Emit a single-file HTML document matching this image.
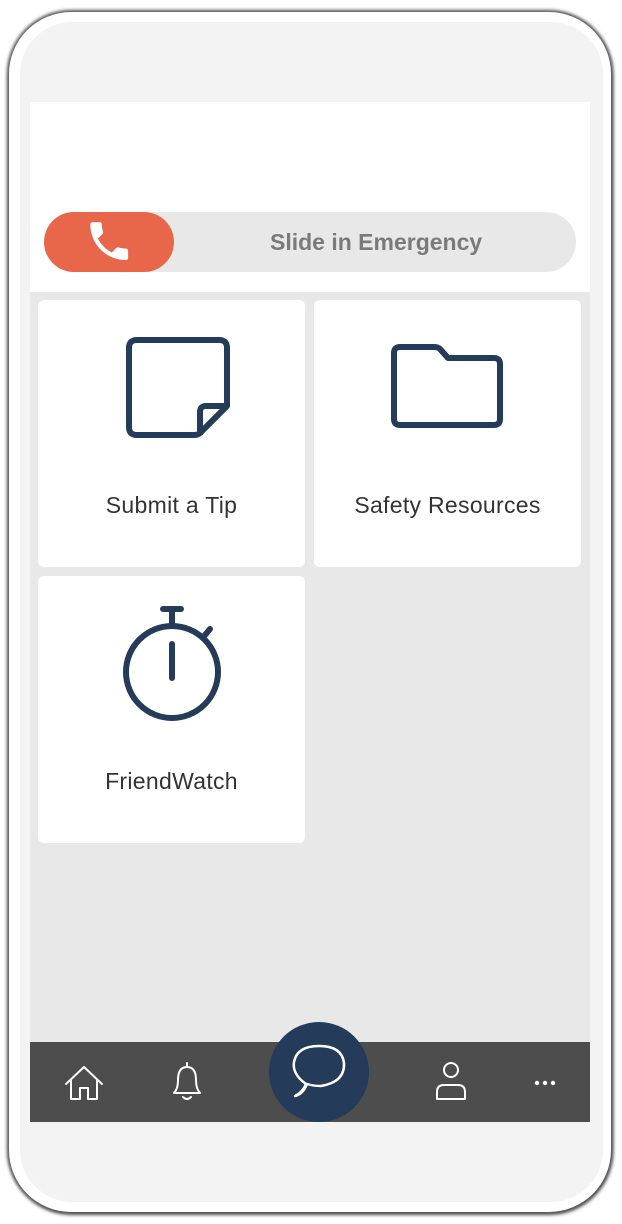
<!DOCTYPE html>
<html><head><meta charset="utf-8"><style>
*{margin:0;padding:0;box-sizing:border-box}
body{width:622px;height:1224px;background:#fff;position:relative;overflow:hidden;font-family:"Liberation Sans",sans-serif}
.outer{position:absolute;left:9px;top:12px;width:602px;height:1200px;border-radius:62px;background:#fff;box-shadow:0 0 3px 2px #555,1px 2px 4px #444}
.inner{position:absolute;left:20px;top:22px;width:583px;height:1180px;border-radius:52px;background:#f4f3f4}
.screen{position:absolute;left:30px;top:102px;width:560px;height:1020px;background:#e8e8e8;overflow:hidden}
.hdr{position:absolute;left:0;top:0;width:560px;height:190px;background:#fff}
.slider{position:absolute;left:14px;top:110px;width:532px;height:60px;border-radius:30px;background:#e8e8e8}
.knob{position:absolute;left:0;top:0;width:130px;height:60px;border-radius:30px;background:#e8674b}
.slabel{position:absolute;left:226px;top:0;line-height:60px;font-size:23px;font-weight:bold;color:#7a7a7a}
.card{position:absolute;width:267px;height:267px;background:#fff;border-radius:6px}
.card span{position:absolute;left:0;right:0;top:192px;text-align:center;font-size:23px;color:#333;letter-spacing:.3px}
.nav{position:absolute;left:0;top:940px;width:560px;height:80px;background:#4d4d4d}
.fab{position:absolute;left:239px;top:920px;width:100px;height:100px;border-radius:50%;background:#243b5a}
</style></head><body>
<div class="outer"></div>
<div class="inner"></div>
<div class="screen">
 <div class="hdr">
  <div class="slider">
   <div class="knob">
    <svg width="130" height="60" viewBox="0 0 130 60"><path transform="translate(40,4) scale(2.1)" d="M6.62 10.79c1.44 2.83 3.76 5.14 6.59 6.59l2.2-2.2c.27-.27.67-.36 1.02-.24 1.12.37 2.33.57 3.57.57.55 0 1 .45 1 1V20c0 .55-.45 1-1 1-9.39 0-17-7.610-17-17 0-.55.45-1 1-1h3.5c.55 0 1 .45 1 1 0 1.25.2 2.45.57 3.57.11.35.03.74-.25 1.020l-2.2 2.2z" fill="#fff"/></svg>
   </div>
   <div class="slabel">Slide in Emergency</div>
  </div>
 </div>
 <div class="card" style="left:8px;top:198px">
  <svg width="267" height="160" style="position:absolute;left:0;top:0"><g fill="none" stroke="#243b5a" stroke-width="6" stroke-linejoin="round"><path d="M99 40 H181 Q189 40 189 48 V106 L162 133 Q160 135 156 135 H99 Q91 135 91 127 V48 Q91 40 99 40 Z"/><path d="M189 106 H168 Q162 106 162 112 V135"/></g></svg>
  <span>Submit a Tip</span>
 </div>
 <div class="card" style="left:284px;top:198px">
  <svg width="267" height="160" style="position:absolute;left:0;top:0"><path d="M86 47 H120 Q124 47 126 49 L134 58 H180 Q186 58 186 64 V119 Q186 125 180 125 H86 Q80 125 80 119 V53 Q80 47 86 47 Z" fill="none" stroke="#243b5a" stroke-width="6" stroke-linejoin="round"/></svg>
  <span>Safety Resources</span>
 </div>
 <div class="card" style="left:8px;top:474px">
  <svg width="267" height="160" style="position:absolute;left:0;top:0"><g fill="none" stroke="#243b5a" stroke-width="6" stroke-linecap="round"><circle cx="134" cy="96" r="46"/><path d="M125 33 H143 M134 33 V48 M134 68 V102 M167 59 L172 53"/></g></svg>
  <span>FriendWatch</span>
 </div>
 <div class="nav">
  <svg width="560" height="80" style="position:absolute;left:0;top:0" fill="none" stroke="#fff" stroke-width="2" stroke-linejoin="round" stroke-linecap="round">
   <path d="M36 42 L54 25 L72 42 M41 38 V57 H50 V46 H58 V57 H67 V38"/>
   <path d="M144 51 Q148 47 148 38 Q148 25 157 25 Q166 25 166 38 Q166 47 170 51 Z M157 21 V25 M153 55 Q157 59 161 55"/>
   <circle cx="421" cy="28" r="7"/>
   <path d="M407 57 V50 Q407 43 414 43 H428 Q435 43 435 50 V57 Z"/>
  </svg>
  <svg width="560" height="80" style="position:absolute;left:0;top:0" fill="#fff"><circle cx="507" cy="41" r="2.2"/><circle cx="515" cy="41" r="2.2"/><circle cx="523" cy="41" r="2.2"/></svg>
 </div>
 <div class="fab">
  <svg width="100" height="100" fill="none" stroke="#fff" stroke-width="2.5" stroke-linejoin="round"><path d="M26 74 Q34 70 37 62 Q23 52 25 40 Q28 24 50 24 Q73 24 75 41 Q76 60 52 64 Q44 64 38 62 Q34 72 26 74 Z"/></svg>
 </div>
</div>
</body></html>
